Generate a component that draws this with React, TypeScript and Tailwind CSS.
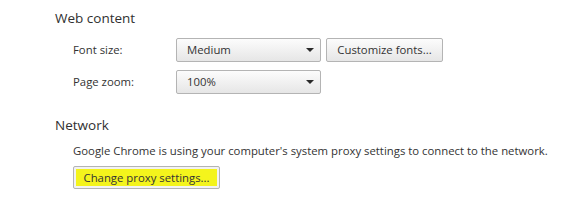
const font = { fontFamily: '"Open Sans", "Noto Sans", sans-serif' };

function Select({ value }: { value: string }) {
  return (
    <div className="flex items-center justify-between w-[145px] h-[24px] pl-[10px] pr-[6px] rounded-[2px] border border-[#b4b4b4] bg-gradient-to-b from-[#fcfcfc] to-[#e6e6e6] text-[11.35px] text-[#333]">
      <span>{value}</span>
      <span className="w-0 h-0 border-l-[4px] border-r-[4px] border-t-[4px] border-l-transparent border-r-transparent border-t-[#2a2a2a]" />
    </div>
  );
}

function Button({ children }: { children: React.ReactNode }) {
  return (
    <button className="h-[24px] w-[117px] rounded-[2px] border border-[#b4b4b4] bg-gradient-to-b from-[#fcfcfc] to-[#e6e6e6] text-[11.35px] text-[#333]">
      {children}
    </button>
  );
}

export default function App() {
  return (
    <div className="w-[565px] h-[202px] bg-white pl-[55px] pt-[9px] text-[#333]" style={font}>
      <div className="text-[13.5px] leading-[18px] text-[#303030]">Web content</div>

      <div className="pl-[18px] mt-[11px] flex flex-col gap-[8px] text-[11.35px]">
        <div className="flex items-center">
          <span className="w-[103px]">Font size:</span>
          <Select value="Medium" />
          <div className="ml-[5px]">
            <Button>Customize fonts...</Button>
          </div>
        </div>
        <div className="flex items-center">
          <span className="w-[103px]">Page zoom:</span>
          <Select value="100%" />
        </div>
      </div>

      <div className="mt-[22px] text-[13.5px] leading-[18px] text-[#303030]">Network</div>

      <div className="pl-[18px] mt-[9px] text-[11.35px] leading-[16px]">
        <p className="whitespace-nowrap">Google Chrome is using your computer's system proxy settings to connect to the network.</p>
        <button className="mt-[7px] h-[23px] w-[147px] rounded-[2px] border border-[#b4b4b4] bg-[#f2f2f2] p-[2px]">
          <span className="flex items-center justify-center h-full w-full bg-[#f4f41c] text-[#333]">
            Change proxy settings...
          </span>
        </button>
      </div>
    </div>
  );
}
